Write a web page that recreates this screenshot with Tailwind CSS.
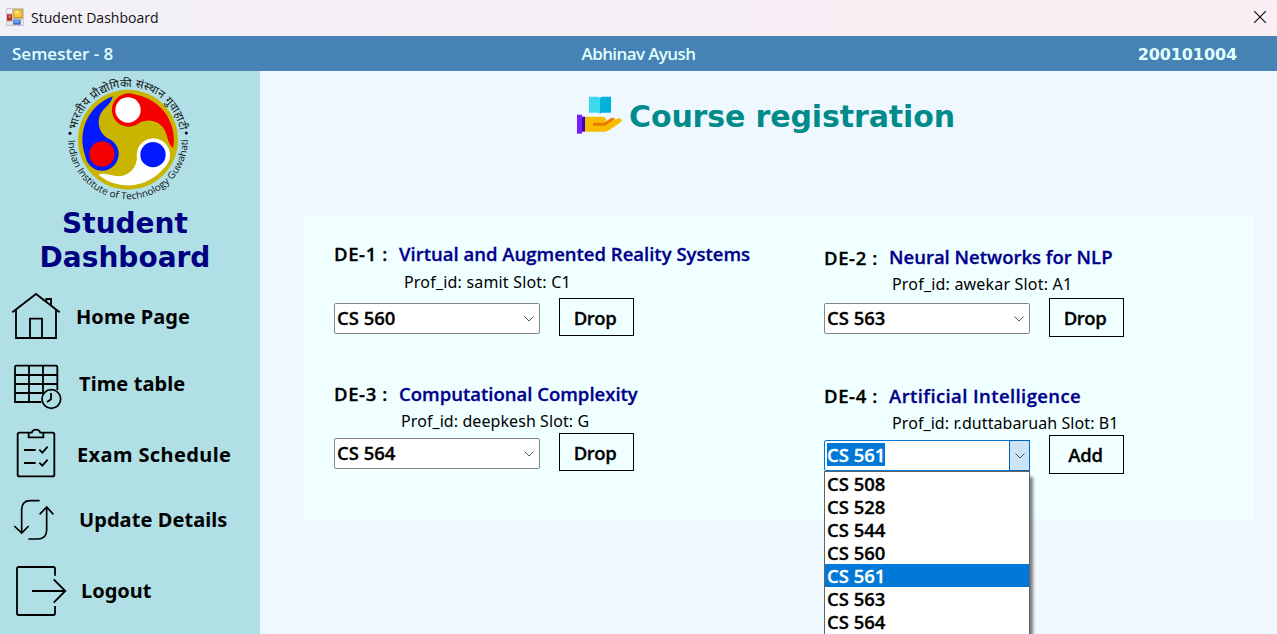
<!DOCTYPE html>
<html lang="en">
<head>
<meta charset="utf-8">
<title>Student Dashboard</title>
<script src="https://cdn.jsdelivr.net/npm/@tailwindcss/browser@4"></script>
</head>
<body class="w-[1277px] h-[634px] overflow-hidden flex flex-col bg-[#f0f8ff] font-['Open_Sans',sans-serif] text-black">

<!-- Window title bar -->
<header class="h-9 shrink-0 flex items-center pl-1.5 pr-[11px] bg-linear-to-r from-[#f3f0f8] to-[#faeff3]">
  <svg class="w-[18px] h-[18px] -mt-0.5" viewBox="0 0 54 54">
    <rect width="54" height="54" fill="#cbc9cf"/>
    <rect x="3" y="4" width="15" height="12" fill="#f4f4f6"/>
    <rect x="3" y="19" width="15" height="19" fill="#b5302a"/><rect x="8" y="23" width="6" height="6" fill="#e88a80"/>
    <rect x="22" y="4" width="28" height="27" fill="#c99a1c"/><rect x="25" y="7" width="22" height="20" fill="#fbc62f"/><rect x="26" y="8" width="12" height="9" fill="#fde08a"/>
    <rect x="22" y="35" width="22" height="15" fill="#3f74d1"/><rect x="25" y="37" width="15" height="6" fill="#82aef0"/>
    <rect x="4" y="42" width="5" height="8" fill="#f4f4f6"/><rect x="12" y="42" width="6" height="8" fill="#f4f4f6"/><rect x="46" y="35" width="5" height="15" fill="#f4f4f6"/>
  </svg>
  <span class="ml-[7px] text-[14px] leading-5 tracking-[0.03px] text-[#111]">Student Dashboard</span>
  <svg class="ml-auto -mt-0.5 w-3 h-3" viewBox="0 0 12 12" fill="none" stroke="#111" stroke-width="1.2"><path d="M0 0L12 12M12 0L0 12"/></svg>
</header>

<!-- User bar -->
<div class="h-[35px] shrink-0 grid grid-cols-3 items-center bg-[#4682b4] text-[#e0ffff] text-[17px] leading-[34px] font-semibold">
  <span class="pl-3 pt-px">Semester - 8</span>
  <span class="text-center pt-px tracking-[-0.6px]">Abhinav Ayush</span>
  <span class="text-right pr-10 pt-0.5 -mb-px text-[16px] tracking-[-0.1px] font-bold font-['DejaVu_Sans',sans-serif]">200101004</span>
</div>

<div class="flex-1 min-h-0 flex">
  <!-- Sidebar -->
  <aside class="w-[260px] shrink-0 bg-[#b0e0e6] flex flex-col">
    <svg class="ml-[55px] w-[150px] h-[135px] shrink-0 -mt-px" viewBox="0 0 450 405">
      <defs>
        <path id="arcTop" d="M61 209A158 158 0 0 1 377 209"/>
        <path id="arcBottom" d="M40 209A179 179 0 0 0 398 209"/>
        <g id="swirl">
          <path d="M-46 -130A138 138 0 0 0 -120 66L-78 43L-58 -2C-78 -15 -88 -32 -88 -54C-86 -94 -52 -98 -46 -130Z"/>
          <circle cx="-78" cy="43" r="50"/>
        </g>
      </defs>
      <circle cx="219" cy="209" r="150" fill="#c9b500"/>
      <g transform="translate(219 209)">
        <use href="#swirl" fill="#0019ff"/>
        <use href="#swirl" fill="#f40000" transform="rotate(120)"/>
        <use href="#swirl" fill="#fff" transform="rotate(240)"/>
        <circle cx="-78" cy="43" r="38" fill="#f40000"/>
        <circle cx="0" cy="-89" r="38" fill="#fff"/>
        <circle cx="75" cy="45" r="38" fill="#0019ff"/>
      </g>
      <circle cx="45" cy="190" r="4.5"/><circle cx="394" cy="189" r="4.5"/>
      <text font-size="34" font-family="Noto Sans" fill="#111"><textPath href="#arcTop" startOffset="29" textLength="440" lengthAdjust="spacing">भारतीय प्रौद्योगिकी संस्थान गुवाहाटी</textPath></text>
      <text font-size="29" font-weight="500" font-family="Open Sans" fill="#111"><textPath href="#arcBottom" startOffset="1" textLength="562" lengthAdjust="spacingAndGlyphs">Indian Institute of Technology Guwahati</textPath></text>
    </svg>
    <h1 class="mt-0.5 w-[250px] shrink-0 text-center text-[28px] leading-[34px] font-bold text-[#000080] font-['DejaVu_Sans',sans-serif]">Student<br>Dashboard</h1>

    <nav class="mt-4 flex flex-col text-[20px] leading-[52px] font-bold font-['Noto_Sans',sans-serif]">
      <a class="h-[50px] flex">
        <svg class="w-[70px] h-[50px] overflow-visible" viewBox="0 273 210 150" fill="none" stroke="#000" stroke-width="5.5"><path d="M37 337L108 282L179 337M48 329V414H168V329M90 414V356H126V414M139 305V297H153V318"/></svg>
        <span class="pl-1.5 tracking-[0.05px]">Home Page</span>
      </a>
      <a class="h-[50px] mt-[17px] flex">
        <svg class="w-[70px] h-[50px] overflow-visible" viewBox="0 24 210 150" fill="none" stroke="#000" stroke-width="5.5"><path d="M124 156H45V51Q45 47 49 47H168Q172 47 172 51V120M45 75H172M45 102H172M45 129H130M87 47V156M129 47V129"/><circle cx="154" cy="147" r="28" fill="#b0e0e6" stroke-width="5"/><path d="M153 129V148L141 156"/></svg>
        <span class="pl-[9px] tracking-[0.1px]">Time table</span>
      </a>
      <a class="h-[50px] mt-[21px] flex">
        <svg class="w-[70px] h-[50px] overflow-visible" viewBox="0 237 210 150" fill="none" stroke="#000" stroke-width="5.5"><path d="M87 248H58Q53 248 53 253V374Q53 379 58 379H158Q163 379 163 374V253Q163 248 158 248H130M86 248V262H130V248H121Q118 239 108 239Q98 239 95 248H86M72 300H107M72 339H107M118 299L127 308L143 290M118 338L127 347L143 329"/></svg>
        <span class="pl-[7px] tracking-[0.4px]">Exam Schedule</span>
      </a>
      <a class="h-[50px] mt-[15px] flex">
        <svg class="w-[70px] h-[50px] overflow-visible" viewBox="0 12 210 150" fill="none" stroke="#000" stroke-width="5"><path d="M119 32H92Q65 32 65 59V128M43 108L65 129L86 108M85 147H112Q140 147 140 120V52M119 73L140 51L160 73"/></svg>
        <span class="pl-[9px] tracking-[0.07px]">Update Details</span>
      </a>
      <a class="h-[50px] mt-[21px] flex">
        <svg class="w-[70px] h-[50px] overflow-visible" viewBox="0 225 210 150" fill="none" stroke="#000" stroke-width="5.5"><path d="M165 257V236Q165 231 160 231H56Q51 231 51 236V370Q51 375 56 375H160Q165 375 165 370V348M96 303H195M161 268L196 303L161 338"/></svg>
        <span class="pl-[11px]">Logout</span>
      </a>
    </nav>
  </aside>

  <!-- Main content -->
  <main class="flex-1 min-w-0 pl-11 pr-[23px] flex flex-col">
    <div class="h-[145px] shrink-0 flex pt-[23px] pl-[273px]">
      <svg class="w-[45px] h-[45px] shrink-0" viewBox="51 175 135 135">
        <path d="M87 183H114Q120 183 120 189V234L115 231H87Z" fill="#3fd9ec"/><path d="M153 183H126Q120 183 120 189V234L125 231H153Z" fill="#00b3dc"/>
        <path d="M75 243H126Q138 243 138 254L136 262L171 249Q182 246 185 253Q186 257 182 260L148 283Q140 288 132 288H75Z" fill="#f8bb00"/>
        <path d="M99 261H132L152 248Q160 244 165 249L136 270H99Z" fill="#ee7a00"/>
        <path d="M51 237H66V294H51Z" fill="#7a1fff"/><path d="M66 243H75V288H66Z" fill="#3a00b8"/>
      </svg>
      <h2 class="ml-[7px] h-[46px] text-[30px] tracking-[-0.12px] leading-[46px] font-bold text-[#008b8b] whitespace-nowrap font-['DejaVu_Sans',sans-serif]">Course registration</h2>
    </div>

    <section class="h-[303px] bg-[#f0ffff] grid grid-cols-[490px_460px] grid-rows-[135px_168px] pl-[30px] text-[18.5px] font-semibold whitespace-nowrap">
      <div class="pt-[25px]">
        <div class="h-[26px] leading-[26px] flex [-webkit-text-stroke:0.3px]"><span class="w-16 tracking-[0.6px]">DE-1 :</span><span class="pl-px text-[#00008b]">Virtual and Augmented Reality Systems</span></div>
        <div class="h-6 leading-6 mt-[3px] pl-[70px] text-[16px] font-normal font-['Noto_Sans',sans-serif] tracking-[0.19px]">Prof_id: samit Slot: C1</div>
        <div class="flex mt-1 [-webkit-text-stroke:0.3px]">
          <div class="mt-[5px] w-[206px] h-[31px] border border-[#858585] rounded-xs bg-white flex items-center pl-0.5 pr-[5px] leading-[26px]"><span class="pb-px">CS 560</span><svg class="ml-auto w-[10px] h-[6px]" viewBox="0 0 10 6" fill="none" stroke="#555"><path d="M.5 .5L5 5L9.5 .5"/></svg></div>
          <button class="ml-[19px] w-[75px] h-[38px] border border-black leading-[36px] pt-px pr-[3px] tracking-[-0.5px]">Drop</button>
        </div>
      </div>

      <div class="pt-7">
        <div class="h-[26px] leading-[26px] flex [-webkit-text-stroke:0.3px]"><span class="w-16 pt-px tracking-[0.6px]">DE-2 :</span><span class="pl-px text-[#00008b]">Neural Networks for NLP</span></div>
        <div class="h-6 leading-6 mt-0.5 pl-[68px] text-[16px] font-normal font-['Noto_Sans',sans-serif] tracking-[0.19px]">Prof_id: awekar Slot: A1</div>
        <div class="flex mt-0.5 [-webkit-text-stroke:0.3px]">
          <div class="mt-[5px] w-[206px] h-[31px] border border-[#858585] rounded-xs bg-white flex items-center pl-0.5 pr-[5px] leading-[26px]"><span class="pb-px">CS 563</span><svg class="ml-auto w-[10px] h-[6px]" viewBox="0 0 10 6" fill="none" stroke="#555"><path d="M.5 .5L5 5L9.5 .5"/></svg></div>
          <button class="ml-[19px] w-[75px] h-[39px] border border-black leading-[36px] pr-[3px] tracking-[-0.5px]">Drop</button>
        </div>
      </div>

      <div class="pt-[30px]">
        <div class="h-[26px] leading-[26px] flex [-webkit-text-stroke:0.3px]"><span class="w-16 tracking-[0.6px]">DE-3 :</span><span class="pl-px text-[#00008b]">Computational Complexity</span></div>
        <div class="h-6 leading-6 mt-0.5 pl-[67px] text-[16px] font-normal font-['Noto_Sans',sans-serif] tracking-[0.08px]">Prof_id: deepkesh Slot: G</div>
        <div class="flex [-webkit-text-stroke:0.3px]">
          <div class="mt-[5px] w-[206px] h-[31px] border border-[#858585] rounded-xs bg-white flex items-center pl-0.5 pr-[5px] leading-[26px]"><span class="pb-px">CS 564</span><svg class="ml-auto w-[10px] h-[6px]" viewBox="0 0 10 6" fill="none" stroke="#555"><path d="M.5 .5L5 5L9.5 .5"/></svg></div>
          <button class="ml-[19px] w-[75px] h-[38px] border border-black leading-[36px] pt-px pr-[3px] tracking-[-0.5px]">Drop</button>
        </div>
      </div>

      <div class="pt-8">
        <div class="h-[26px] leading-[26px] flex [-webkit-text-stroke:0.3px]"><span class="w-16 tracking-[0.6px]">DE-4 :</span><span class="pl-px text-[#00008b] tracking-[0.4px]">Artificial Intelligence</span></div>
        <div class="h-6 leading-6 mt-0.5 pl-[68px] text-[16px] font-normal font-['Noto_Sans',sans-serif] tracking-[0.08px]">Prof_id: r.duttabaruah Slot: B1</div>
        <div class="flex [-webkit-text-stroke:0.3px]">
          <div class="relative mt-[5px] w-[206px] h-[31px] border border-[#0078d7] rounded-xs bg-white flex">
            <span class="ml-0.5 mt-0.5 h-[23px] leading-6 bg-[#0078d7] text-white">CS 561</span>
            <span class="ml-auto -my-px -mr-px w-[21px] border border-[#0063b1] bg-[#cce4f7] flex items-center justify-center"><svg class="w-[10px] h-[6px]" viewBox="0 0 10 6" fill="none" stroke="#555"><path d="M.5 .5L5 5L9.5 .5"/></svg></span>
            <!-- Open option list -->
            <ul class="absolute z-10 -left-px top-[30px] w-[206px] border border-[#646464] bg-white leading-6 shadow-[4px_5px_3px_-1px_rgba(0,0,0,0.5)] *:h-[23px] *:pl-0.5">
              <li>CS 508</li><li>CS 528</li><li>CS 544</li><li>CS 560</li>
              <li class="bg-[#0078d7] text-white">CS 561</li>
              <li>CS 563</li><li>CS 564</li><li></li>
            </ul>
          </div>
          <button class="ml-[19px] w-[75px] h-[39px] border border-black leading-[36px] pr-0.5 tracking-[-0.2px]">Add</button>
        </div>
      </div>
    </section>
  </main>
</div>
</body>
</html>
